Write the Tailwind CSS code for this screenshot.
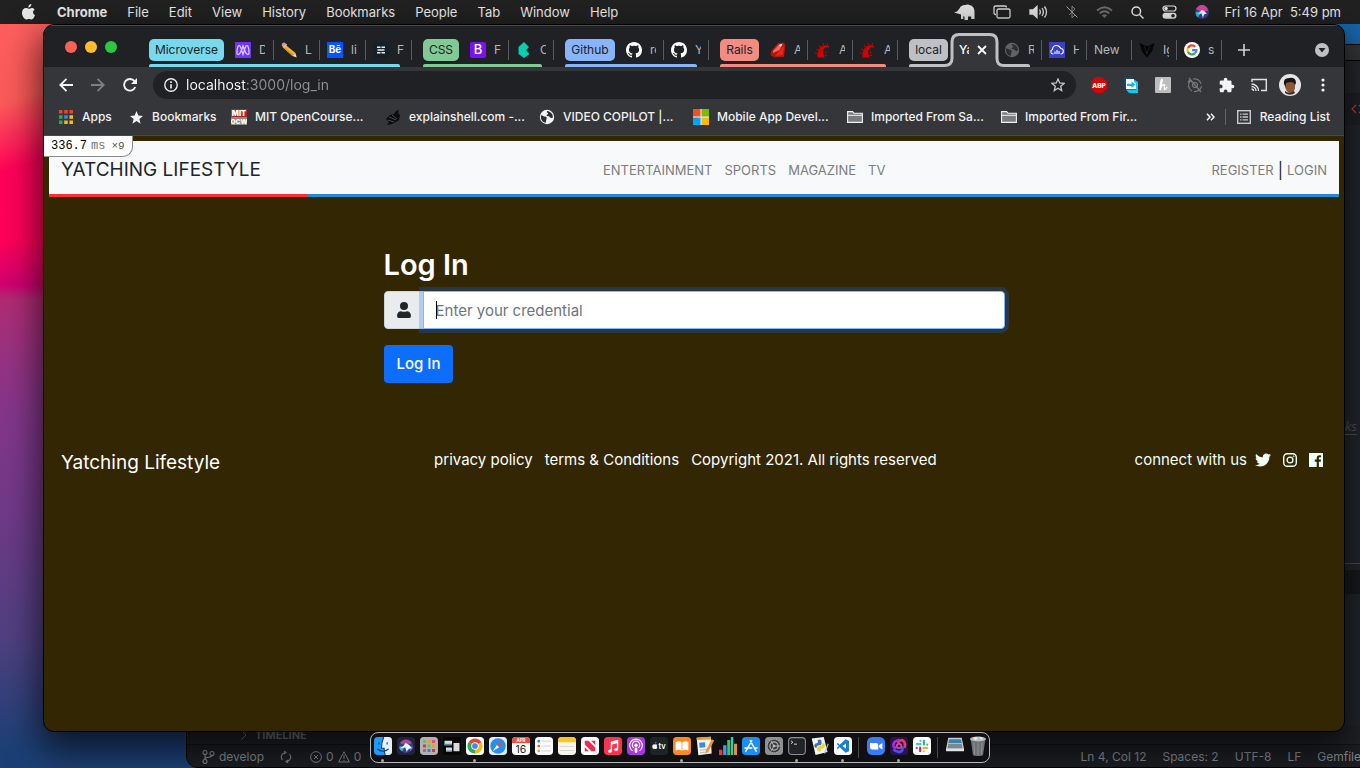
<!DOCTYPE html>
<html lang="en">
<head>
<meta charset="utf-8">
<title>Yatching Lifestyle</title>
<script src="https://cdn.jsdelivr.net/npm/@tailwindcss/browser@4"></script>
</head>
<body class="relative h-screen overflow-hidden bg-[#1867a9] font-[Inter,'Liberation_Sans',sans-serif] text-[13px] leading-4">

<!-- Shared icons -->
<svg class="hidden" aria-hidden="true">
  <symbol id="github" viewBox="0 0 16 16"><path fill="#fff" d="M8 0C3.58 0 0 3.58 0 8c0 3.54 2.29 6.53 5.47 7.59.4.07.55-.17.55-.38 0-.19-.01-.82-.01-1.49-2.01.37-2.53-.49-2.69-.94-.09-.23-.48-.94-.82-1.13-.28-.15-.68-.52-.01-.53.63-.01 1.08.58 1.23.82.72 1.21 1.87.87 2.33.66.07-.52.28-.87.51-1.07-1.78-.2-3.64-.89-3.64-3.95 0-.87.31-1.59.82-2.15-.08-.2-.36-1.02.08-2.12 0 0 .67-.21 2.2.82.64-.18 1.32-.27 2-.27s1.36.09 2 .27c1.53-1.04 2.2-.82 2.2-.82.44 1.1.16 1.92.08 2.12.51.56.82 1.27.82 2.15 0 3.07-1.87 3.75-3.65 3.95.29.25.54.73.54 1.48 0 1.07-.01 1.93-.01 2.2 0 .21.15.46.55.38A8.01 8.01 0 0 0 16 8c0-4.42-3.58-8-8-8z"/></symbol>
  <symbol id="rails" viewBox="0 0 16 16"><path fill="#d30001" d="M2.500 15.500C2 9.500 4.500 5 8.500 3.600c2.500-.8 4.500-.3 6 1.200l-1 .9c-3-1-4.800.3-5.200 2.800-.3 2 .2 4.500 1.400 7z"/><path stroke="#d30001" stroke-width="1.200" d="M1.800 11.500L.2 11M3 8L1.500 7M5.300 5L4.300 3.600M8.500 3L8.200 1.300M12 2.800l.6-1.500M10 10l1.500.5M10.300 13l1.700.7"/></symbol>
  <symbol id="globe" viewBox="0 0 16 16"><circle cx="8" cy="8" r="7.200" fill="currentColor"/><path fill="#2c2d30" d="M2 6.200c2 .3 2.600 1.200 4 1.400 1.600.2 2 1.200 1.500 2.400-.6 1.300-.2 2-.8 3.800-3-.4-5.400-3.400-4.700-7.600zM8.200 2c-.7 1-.2 1.600.6 2.100.7.500.4 1.300-.5 1.500-1 .3-1 1.200 0 1.500 1.400.3 2 .2 2.600 1.200.5.800 1.200.9 2.800.4.700-3-1.500-6-5.500-6.700z"/></symbol>
  <symbol id="folder" viewBox="0 0 16 14"><path fill="#7a7b7e" stroke="#f1f3f4" stroke-width="1.100" d="M.6 12.400V1.600h5l1.500 1.700h8.300v9.100z"/><path stroke="#f1f3f4" d="M1 5.300h14"/></symbol>
</svg>

<!-- Wallpaper -->
<div class="absolute inset-y-0 left-0 w-[400px] bg-[linear-gradient(180deg,#ff0a5c_0px,#ff0058_240px,#d00070_284px,#b02c74_300px,#9a3280_350px,#84368a_410px,#6e3a88_520px,#4e4080_640px,#1c4076_750px)]"></div>
<div class="absolute left-0 top-0 h-[240px] w-[60px] bg-[linear-gradient(162deg,#ff6060_0px,#fa5a58_100px,#ff0058_165px,transparent_230px)]"></div>

<!-- Editor window behind the browser -->
<section aria-label="Editor" class="absolute -right-3 bottom-0 left-[186px] top-11 flex flex-col overflow-hidden rounded-xl border border-black bg-[#23262e] text-[#868b94]">
  <div class="h-4 shrink-0 border-b border-black bg-[#353638]"></div>
  <div class="flex h-16 shrink-0 flex-col justify-end bg-[#25282f]">
    <div class="flex h-8 items-center justify-end bg-[#1f2126] text-[#c0393f]"><svg class="h-3 w-5" viewBox="0 0 20 12" fill="none" stroke="currentColor" stroke-width="1.200"><path d="M5 2L1 6l4 4M8 2l4 4-4 4"/></svg></div>
  </div>
  <div class="flex grow flex-col items-end justify-center pr-[14px] pt-[164px] font-['Noto_Sans'] italic text-[#50545c]"><span class="border-b border-[#50545c]">links</span></div>
  <div class="h-[7px] shrink-0 border-t border-[#4a4c50]"></div>
  <div class="h-6 shrink-0 bg-[#18191d]"></div>
  <div class="flex h-[150px] shrink-0 items-end bg-[#22252c]">
    <div class="flex h-[18px] w-full items-center gap-2 bg-[#202227] pl-[54px] text-[11px] font-bold text-[#75787e]"><svg class="h-2.5 w-1.5" viewBox="0 0 6 10" fill="none" stroke="currentColor"><path d="M.5 .5L5 5 .5 9.500"/></svg>TIMELINE</div>
  </div>
  <footer class="flex h-[23px] shrink-0 items-center border-t border-black/30 bg-[#1c1e23] pl-[15px] pt-0.5 text-xs">
    <svg class="mr-1 h-[14px] w-[13px]" viewBox="0 0 13 14" fill="none" stroke="currentColor" stroke-width="1.100"><circle cx="3" cy="2.500" r="2"/><circle cx="3" cy="11.500" r="2"/><circle cx="10" cy="3.500" r="2"/><path d="M3 4.500v5M10 5.500c0 2.500-7 1-7 3.500"/></svg>
    <span class="mr-4">develop</span>
    <svg class="mr-[18px] h-3 w-3" viewBox="0 0 12 12" fill="none" stroke="currentColor" stroke-width="1.100"><path d="M2.500 9A4.600 4.600 0 0 1 5 1.500M9.500 3A4.600 4.600 0 0 1 7 10.500M4 0l2 1.500L4 3M8 9l-2 1.500L8 12"/></svg>
    <svg class="mr-1 h-3 w-3" viewBox="0 0 12 12" fill="none" stroke="currentColor"><circle cx="6" cy="6" r="5.400"/><path d="M4 4l4 4M8 4L4 8"/></svg>0
    <svg class="mx-1 h-3 w-3" viewBox="0 0 12 12" fill="none" stroke="currentColor"><path d="M6 .8L11.400 11H.6zM6 4v4M6 9v1"/></svg>0
    <div class="ml-auto flex gap-4 pr-2.5"><span>Ln 4, Col 12</span><span>Spaces: 2</span><span>UTF-8</span><span>LF</span><span>Gemfile</span></div>
  </footer>
</section>

<!-- System menu bar -->
<header class="relative flex h-6 items-center bg-[#212121] pl-[21px] pr-[19px] text-[13px] text-[#ececec]">
  <svg class="mr-[21px] h-4 w-[15px]" viewBox="0 0 15 16" fill="#e6e6e6"><path d="M10.400 0c.1 1.900-1.400 3.500-3.100 3.400C7.100 1.700 8.700.1 10.400 0zM13.600 5.400c-2.300 1.500-1.900 4.700.5 5.700-.5 1.500-1.900 4.400-3.600 4.400-1 0-1.400-.6-2.600-.6s-1.700.6-2.600.6C3.300 15.500 1 12 1 8.800c0-3 1.900-4.800 3.900-4.800 1.100 0 2 .7 2.900.7.800 0 1.700-.8 3.100-.8 1 0 2.100.5 2.700 1.500z"/></svg>
  <nav class="flex gap-5 whitespace-nowrap"><b class="font-bold">Chrome</b><span>File</span><span>Edit</span><span>View</span><span>History</span><span>Bookmarks</span><span>People</span><span>Tab</span><span>Window</span><span>Help</span></nav>
  <div class="ml-auto flex items-center gap-[18px]">
    <svg class="h-4 w-[21px]" viewBox="0 0 21 16" fill="#e0e0e0"><path d="M0 8.500l3-1 2.500-3C6.500 2 9 .5 12 1c1-.8 3-.6 4 .3C19.500 2 20.500 5 20.500 8v7h-3.300v-2.500H14V16h-3.500v-3.300l-1.200-.7V15H7v-4.500L4.500 9.800z"/></svg>
    <svg class="h-[14px] w-[18px]" viewBox="0 0 18 14" fill="none" stroke="#d8d8d8" stroke-width="1.300"><path d="M3 9.500H2.500A1.500 1.500 0 0 1 1 8V2.500A1.500 1.500 0 0 1 2.500 1H12a1.500 1.500 0 0 1 1.500 1.500"/><rect x="4" y="4" width="13" height="9" rx="1.500"/></svg>
    <svg class="h-[14px] w-[19px]" viewBox="0 0 19 14" fill="none" stroke="#e0e0e0" stroke-width="1.300"><path fill="#e0e0e0" d="M1 5h3l4-3.500v11L4 9H1z"/><path d="M10.500 4.500q1.700 2.500 0 5M13 3q2.800 4 0 8M15.500 1.500q4 5.500 0 11"/></svg>
    <svg class="h-[14px] w-3" viewBox="0 0 12 14" fill="none" stroke="#858585"><path d="M3 4l6 6-3 3V1l3 3-6 6"/><path d="M.5 1.500l11 11" stroke="#aaa"/></svg>
    <svg class="h-3 w-[17px]" viewBox="0 0 17 12" fill="none" stroke="#6e6e6e" stroke-width="2"><path d="M1 4.500q7.500-6.500 15 0M3.700 7.300q4.800-4 9.600 0"/><path fill="#6e6e6e" stroke="none" d="M5.800 9.300q2.700-2.200 5.400 0L8.500 12z"/></svg>
    <svg class="h-[13px] w-[13px]" viewBox="0 0 13 13" fill="none" stroke="#e6e6e6" stroke-width="1.500"><circle cx="5.300" cy="5.300" r="4.300"/><path d="M8.500 8.500l4 4"/></svg>
    <svg class="h-[14px] w-[15px]" viewBox="0 0 15 14"><rect x="1" y="1" width="13" height="5" rx="2.500" fill="none" stroke="#e6e6e6" stroke-width="1.200"/><circle cx="4" cy="3.500" r="1.800" fill="#e6e6e6"/><rect x=".5" y="7.700" width="14" height="6" rx="3" fill="#e6e6e6"/><circle cx="11" cy="10.700" r="1.800" fill="#212121"/></svg>
    <svg class="-mr-0.5 h-[14px] w-[14px]" viewBox="0 0 14 14"><circle cx="7" cy="7" r="7" fill="#33408c"/><path fill="#e0409c" d="M1 4Q5-2 10 .8q3 2.200 3 5L7 7z"/><path fill="#28b8d8" d="M1 7l6-1-4 6.500Q0 10 1 7z"/><path fill="#e8faff" d="M2 9q3-1 4.500-4Q9 5 12 9 9 8 8 13L6.500 8.500z"/></svg>
    <time class="whitespace-pre">Fri 16 Apr  5:49 pm</time>
  </div>
</header>

<!-- Browser window -->
<main class="absolute bottom-9 left-[43px] right-[15px] top-6 flex flex-col overflow-hidden rounded-[11px] border border-black bg-[#332602] shadow-[0_14px_34px_4px_rgba(0,0,0,0.65)]">

  <!-- Tab strip -->
  <div class="flex h-[42px] shrink-0 items-stretch border-t border-[#4a4b4e] bg-[#202124] text-xs text-[#b4b7bb]">
    <div class="flex w-[105px] shrink-0 items-center gap-2 pl-[21px]">
      <button aria-label="Close window" class="size-3 rounded-full bg-[#fe5f57]"></button><button aria-label="Minimise" class="size-3 rounded-full bg-[#febc2e]"></button><button aria-label="Zoom window" class="size-3 rounded-full bg-[#28c840]"></button>
    </div>

    <div class="relative mr-[11px] flex items-center pt-[7px]">
      <button class="mr-1 h-[22px] w-[75px] rounded-[5px] bg-[#78d9ec] text-[#202124]">Microverse</button>
      <div class="flex h-5 w-[46px] items-center gap-2 border-r border-[#5a5c60] pl-[7px]"><svg class="size-4 shrink-0" viewBox="0 0 16 16"><path fill="#6f33ff" d="M0 0h16v16H0z"/><path fill="none" stroke="#d9c8ff" stroke-width="1.300" d="M2 12c0-5 .5-8.500 2.200-8.500S6 7 8 12.500C10 7 10 3.500 11.800 3.500S14 7 14 12M2 12c2 1.500 3.500-.5 6-8 2.500 7.500 4 9.500 6 8"/></svg><span class="w-1.5 overflow-hidden">D</span></div>
      <div class="flex h-5 w-[46px] items-center gap-2 border-r border-[#5a5c60] pl-[7px]"><svg class="size-4 shrink-0" viewBox="0 0 16 16"><path fill="#f7b82f" d="M4 2.500L14.500 11l-3 3L1.500 5z"/><path fill="#d8922a" d="M2.500 6l1-1.200L13 13l-1.500 1z"/><path fill="#e88b8b" d="M1.200 1.500Q3-.5 5 1.700L2 5Q-.2 3.500 1.200 1.500z"/><path fill="#bcd" d="M5 1.700l1.200 1-3 3.300L2 5z"/><path fill="#f3dcb0" d="M14.500 11l1.200 4.500-4.200-1.500z"/></svg><span>L</span></div>
      <div class="flex h-5 w-[46px] items-center gap-2 border-r border-[#5a5c60] pl-[7px]"><span class="flex size-4 shrink-0 items-center justify-center bg-[#0057ff] text-[10px] font-bold text-white">Bē</span><span>li</span></div>
      <div class="flex h-5 w-[46px] items-center gap-2 border-r border-[#5a5c60] pl-[7px]"><svg class="size-4 shrink-0" viewBox="0 0 16 16"><rect width="16" height="16" rx="2" fill="#14202a"/><path stroke="#e8eef0" stroke-width="1.500" d="M4 5.200h3.500M8.500 5.200H12M4.500 8h7M4 10.800h3.500M8.500 10.800H12"/></svg><span>F</span></div>
      <div class="absolute bottom-0 left-0 right-3 h-[3px] rounded-t-[2px] bg-[#78d9ec]"></div>
    </div>

    <div class="relative mr-[11px] flex items-center pt-[7px]">
      <button class="mr-1 h-[22px] w-9 rounded-[5px] bg-[#81c995] text-[#202124]">CSS</button>
      <div class="flex h-5 w-[46px] items-center gap-2 border-r border-[#5a5c60] pl-[7px]"><span class="flex size-4 shrink-0 items-center justify-center rounded-[2px] bg-[#7a12f5] text-[13px] font-medium text-white">B</span><span>F</span></div>
      <div class="flex h-5 w-[45px] items-center gap-2 border-r border-[#5a5c60] pl-[7px]"><svg class="size-4 shrink-0" viewBox="0 0 16 16"><path fill="#00d1b2" d="M8 0l5 5-3 3 3.500 4L8 16l-5.500-4V5z"/></svg><span class="w-1.5 overflow-hidden">C</span></div>
      <div class="absolute bottom-0 left-0 right-3 h-[3px] rounded-t-[2px] bg-[#81c995]"></div>
    </div>

    <div class="relative mr-[11px] flex items-center pt-[7px]">
      <button class="mr-1 h-[22px] w-[50px] rounded-[5px] bg-[#8ab4f8] text-[#202124]">Github</button>
      <div class="flex h-5 w-[45px] items-center gap-2 border-r border-[#5a5c60] pl-[7px]"><svg class="size-4 shrink-0"><use href="#github"/></svg><span class="w-1.5 overflow-hidden">re</span></div>
      <div class="flex h-5 w-[45px] items-center gap-2 border-r border-[#5a5c60] pl-[7px]"><svg class="size-4 shrink-0"><use href="#github"/></svg><span class="w-1.5 overflow-hidden">Y</span></div>
      <div class="absolute bottom-0 left-0 right-3 h-[3px] rounded-t-[2px] bg-[#8ab4f8]"></div>
    </div>

    <div class="relative mr-[11px] flex items-center pt-[7px]">
      <button class="mr-1 h-[22px] w-[39px] rounded-[5px] bg-[#f28b82] text-[#202124]">Rails</button>
      <div class="flex h-5 w-[45px] items-center gap-2 border-r border-[#5a5c60] pl-[7px]"><svg class="size-4 shrink-0" viewBox="0 0 16 16"><path fill="#b3140c" d="M1 9L8 1l6-.5 1.500 3L14 15l-10 .5L.5 13z"/><path fill="#f0695c" d="M3 9l5.500-6 4-1-3 6L3 11z"/><path fill="#fff" opacity=".75" d="M8.500 3l4-1.500L11 5z"/><path fill="#e02818" d="M9.500 8L14 4l-1 9-8 1z"/></svg><span class="w-1.5 overflow-hidden">A</span></div>
      <div class="flex h-5 w-[45px] items-center gap-2 border-r border-[#5a5c60] pl-[7px]"><svg class="size-4 shrink-0"><use href="#rails"/></svg><span class="w-1.5 overflow-hidden">A</span></div>
      <div class="flex h-5 w-[45px] items-center gap-2 border-r border-[#5a5c60] pl-[7px]"><svg class="size-4 shrink-0"><use href="#rails"/></svg><span class="w-1.5 overflow-hidden">A</span></div>
      <div class="absolute bottom-0 left-0 right-3 h-[3px] rounded-t-[2px] bg-[#f28b82]"></div>
    </div>

    <div class="relative flex items-center pt-[7px]">
      <div class="absolute bottom-0 left-0 right-3 h-[3px] rounded-t-[2px] bg-[#bdc1c6]"></div>
      <button class="mr-1 h-[22px] w-[39px] rounded-[5px] bg-[#bdc1c6] text-[#202124]">local</button>
      <div class="relative flex h-5 w-[45px] items-center gap-2 pl-[7px] text-white">
        <svg class="absolute -left-2 -top-[7px] h-[35px] w-[60px]" viewBox="0 0 60 35"><path fill="#35363a" d="M0 35h60v-1.500q-7 0-7-7V9q0-7.500-7-7.500H15Q8 1.500 8 9v17.500q0 7-8 7z"/><path fill="none" stroke="#bdc1c6" stroke-width="3" d="M0 32.500q8 0 8-7V9q0-7.500 7-7.500h31q7 0 7 7.500v16.500q0 7 7 7"/></svg>
        <span class="relative w-2.5 overflow-hidden font-medium">Ya</span>
        <button aria-label="Close tab" class="relative"><svg class="size-2.5" viewBox="0 0 10 10" stroke="#fff" stroke-width="1.800"><path d="M1 1l8 8M9 1L1 9"/></svg></button>
      </div>
      <div class="flex h-5 w-[45px] items-center gap-2 border-r border-[#5a5c60] pl-[7px]"><svg class="size-4 shrink-0 text-[#5f6368]"><use href="#globe"/></svg><span class="w-1.5 overflow-hidden">R</span></div>
    </div>
    <div class="flex items-center pt-[7px]">
      <div class="flex h-5 w-[45px] items-center gap-2 border-r border-[#5a5c60] pl-[7px]"><svg class="size-4 shrink-0" viewBox="0 0 16 16"><path fill="#3841c8" d="M0 0h16v16H0z"/><path fill="none" stroke="#fff" stroke-width="1.100" d="M4.500 12H4a2.300 2.300 0 0 1-.5-4.500C3.500 5 5 3.500 7.500 3.500S11 5 11.800 6.500c3.200 0 3.500 5 .2 5.500h-.5M6 12V9.500M8 12V8M10 12V9"/></svg><span class="w-1.5 overflow-hidden">H</span></div>
      <div class="flex h-5 w-[45px] items-center border-r border-[#5a5c60] pl-[7px]"><span>New</span></div>
      <div class="flex h-5 w-[45px] items-center gap-2 border-r border-[#5a5c60] pl-[7px]"><svg class="size-4 shrink-0" viewBox="0 0 16 16"><path fill="#050506" d="M.5 1L6 3.500 8 5l2-1.500L15.500 1 13 9.500 8 15.500 3 9.500z"/><path stroke="#202124" d="M5.500 4L8 12l2.500-8"/></svg><span class="w-1.5 overflow-hidden">Ig</span></div>
      <div class="flex h-5 w-[45px] items-center gap-2 border-r border-[#5a5c60] pl-[7px]"><svg class="size-4 shrink-0" viewBox="0 0 16 16" fill="none" stroke-width="2.200"><circle cx="8" cy="8" r="8" fill="#fff"/><path stroke="#ea4335" d="M4 6a4.400 4.400 0 0 1 7.200-1.300"/><path stroke="#fbbc05" d="M4 10a4.400 4.400 0 0 1 0-4"/><path stroke="#34a853" d="M10.800 11.400A4.400 4.400 0 0 1 4 10"/><path stroke="#4285f4" d="M8 8.200h4.400c0 1.200-.6 2.400-1.600 3.200"/></svg><span>s</span></div>
      <button aria-label="New tab" class="ml-4"><svg class="size-3" viewBox="0 0 12 12" stroke="#d0d2d5" stroke-width="1.600"><path d="M6 0v12M0 6h12"/></svg></button>
    </div>
    <button aria-label="Search tabs" class="ml-auto mr-[15px] pt-[7px]"><svg class="size-[14px]" viewBox="0 0 14 14"><circle cx="7" cy="7" r="7" fill="#bdc1c6"/><path fill="#202124" d="M3.500 5h7L7 9.500z"/></svg></button>
  </div>

  <!-- Toolbar -->
  <div class="flex h-9 shrink-0 items-center bg-[#35363a] pl-[15px] pr-[13px]">
    <button aria-label="Back" class="mr-[18px]"><svg class="size-[14px]" viewBox="0 0 14 14" fill="none" stroke="#f1f3f4" stroke-width="1.800"><path d="M14 7H1.500M7.500 .8L1.300 7l6.200 6.200"/></svg></button>
    <button aria-label="Forward" class="mr-[18px]"><svg class="size-[14px]" viewBox="0 0 14 14" fill="none" stroke="#7d7f83" stroke-width="1.800"><path d="M0 7h12.500M6.500 .8L12.700 7l-6.200 6.200"/></svg></button>
    <button aria-label="Reload" class="mr-4"><svg class="size-[14px]" viewBox="0 0 14 14" fill="none" stroke="#f1f3f4" stroke-width="1.900"><path d="M12.300 9A5.800 5.800 0 1 1 11.500 3.200"/><path fill="#f1f3f4" stroke="none" d="M14 0v6H8z"/></svg></button>
    <div class="flex h-7 grow items-center rounded-full bg-[#202124] px-[11px]">
      <svg class="mr-2 size-[14px]" viewBox="0 0 14 14" fill="none" stroke="#e8eaed" stroke-width="1.400"><circle cx="7" cy="7" r="6.200"/><path stroke-width="1.700" d="M7 6.200v4.300M7 3.200v1.700"/></svg>
      <label for="url" class="sr-only">Address</label>
      <input id="url" class="h-7 grow bg-[linear-gradient(90deg,#ffffff_61px,#8e9196_61px)] bg-clip-text text-[14px] leading-7 text-transparent outline-none" value="localhost:3000/log_in">
      <button aria-label="Bookmark this page"><svg class="size-[14px]" viewBox="0 0 14 14" fill="none" stroke="#c4c7ca" stroke-width="1.300"><path d="M7 1l1.700 4 4.300.4-3.300 2.800 1 4.300L7 10.200l-3.700 2.300 1-4.300L1 5.400 5.300 5z"/></svg></button>
    </div>
    <div class="ml-[15px] flex items-center gap-4">
      <svg class="size-4" viewBox="0 0 16 16"><path fill="#d2060a" d="M4.700 0h6.600L16 4.700v6.600L11.300 16H4.700L0 11.300V4.700z"/><text x="8" y="10.600" font-size="6.500" font-weight="800" text-anchor="middle" fill="#fff">ABP</text></svg>
      <svg class="size-4" viewBox="0 0 16 16"><path fill="#0b4a7c" d="M1 0h9v11H1z"/><path fill="#fff" d="M3 2h8v2l3 2v6H3z"/><path fill="#10c8e8" d="M11 2.500l4 2.500v11H6l-3-3.500h10V6.500l-2-1.500z"/><path fill="#16b4e0" d="M4 6.700h4.500V4.500l3.800 3.300-3.800 3.200V9H4z"/></svg>
      <svg class="size-4" viewBox="0 0 16 16"><rect width="16" height="16" rx="1" fill="#bdbdbd"/><path fill="none" stroke="#fff" stroke-width="1.500" d="M5 9C7 6 8 2.500 6.800 2.500S5.500 6 5 13c1-4 2.500-5.500 4-5.500S8.500 12 9.500 12.500 11.500 11 12 10"/></svg>
      <svg class="size-4" viewBox="0 0 16 16" fill="none" stroke="#77797c" stroke-width="1.200"><path d="M5 14A6.500 6.500 0 0 1 3 4M6 2a6.500 6.500 0 0 1 8 5M14.500 9A6.500 6.500 0 0 1 7 14.500M1 5l2-2 2 2M2 1l12 14"/><circle cx="8" cy="8" r="2.500"/></svg>
      <svg class="size-4" viewBox="1 0 23 23" fill="#f1f3f4"><path d="M20.500 11H19V7c0-1.100-.9-2-2-2h-4V3.500C13 2.120 11.880 1 10.500 1S8 2.120 8 3.500V5H4c-1.100 0-1.990.9-1.990 2v3.800H3.500c1.490 0 2.700 1.210 2.700 2.700s-1.210 2.700-2.700 2.700H2V20c0 1.100.9 2 2 2h3.800v-1.500c0-1.490 1.210-2.700 2.700-2.700s2.700 1.210 2.700 2.700V22H17c1.100 0 2-.9 2-2v-4h1.500c1.380 0 2.500-1.120 2.500-2.500S21.880 11 20.500 11z"/></svg>
      <svg class="size-4" viewBox="0 0 16 16" fill="none" stroke="#e0e2e5" stroke-width="1.400"><path d="M1 5V2.500h14.300v11H10M.5 12a2 2 0 0 1 2 2M.5 9.500A4.500 4.500 0 0 1 5 14M.5 7A7 7 0 0 1 7.500 14"/></svg>
      <svg class="-ml-1 size-[22px]" viewBox="0 0 22 22"><circle cx="11" cy="11" r="11" fill="#e6e6e8"/><path fill="#8a5a38" d="M6 8q5-6 10 0v6q-1 5-5 5-3 0-5-6z"/><path fill="#1b1512" d="M5 10q-1-6 5-6 7-1 7 5l-1 2q-1-3-4-3-4 0-5 1.500L6.500 13z"/><path fill="#3d2a1c" d="M6 17q3 2 5 2l4-2 1 2q-5 3.500-10 0z"/></svg>
      <button aria-label="Chrome menu" class="-ml-0.5"><svg class="h-[14px] w-4" viewBox="0 0 16 14" fill="#f1f3f4"><circle cx="8" cy="2" r="1.600"/><circle cx="8" cy="7" r="1.600"/><circle cx="8" cy="12" r="1.600"/></svg></button>
    </div>
  </div>

  <!-- Bookmarks bar -->
  <nav aria-label="Bookmarks" class="flex h-[33px] shrink-0 items-center whitespace-nowrap border-b border-[#47484b] bg-[#35363a] pb-1 pl-[15px] pr-[14px] text-xs font-medium text-[#f1f3f4]">
    <a href="#" class="flex w-[71px] items-center gap-[9px]"><svg class="size-[14px]" viewBox="0 0 14 14"><path fill="#ea4335" d="M0 0h3.500v3.500H0zM5.200 0h3.500v3.500H5.200zM10.400 0H14v3.500h-3.600z"/><path fill="#34a853" d="M0 5.200h3.500v3.500H0zM0 10.400h3.500V14H0z"/><path fill="#4285f4" d="M5.200 5.200h3.500v3.500H5.200z"/><path fill="#fbbc05" d="M10.400 5.200H14v3.500h-3.600zM5.200 10.400h3.500V14H5.200zM10.400 10.400H14V14h-3.600z"/></svg>Apps</a>
    <a href="#" class="flex w-[101px] items-center gap-[9px]"><svg class="size-[13px]" viewBox="0 0 14 14" fill="#f1f3f4"><path d="M7 0l2 4.900 5 .4-3.900 3.300 1.300 5L7 10.900l-4.400 2.700 1.300-5L0 5.300l5-.4z"/></svg>Bookmarks</a>
    <a href="#" class="flex w-[154px] items-center gap-2"><svg class="size-4" viewBox="0 0 16 16"><path fill="#b5202a" d="M0 0h16v8H0z"/><path fill="#8c8c86" d="M0 8h16v8H0z"/><text x="8" y="7" font-size="7.500" font-weight="900" text-anchor="middle" fill="#fff">MIT</text><text x="8" y="15" font-size="6.500" font-weight="900" text-anchor="middle" fill="#fff">OCW</text></svg>MIT OpenCourse...</a>
    <a href="#" class="flex w-[154px] items-center gap-2"><svg class="size-4" viewBox="0 0 16 16"><path fill="#0c0c0d" d="M1 10l4-4 4-1 2-3 3-1-1 3 2 2-1 5-3 2-4 2-5 1 2-3z"/><path stroke="#4a4b4e" d="M4 8l7 3M7 6l5 4M3 11l6 2"/></svg>explainshell.com -...</a>
    <a href="#" class="flex w-[154px] items-center gap-2"><svg class="size-4 text-[#f1f3f4]"><use href="#globe"/></svg>VIDEO COPILOT |...</a>
    <a href="#" class="flex w-[154px] items-center gap-2"><svg class="size-4" viewBox="0 0 16 16"><path fill="#eef" d="M0 0h16v16H0z"/><path fill="#f25022" d="M0 0h7.500v7.500H0z"/><path fill="#7fba00" d="M8.500 0H16v7.500H8.500z"/><path fill="#00a4ef" d="M0 8.500h7.500V16H0z"/><path fill="#ffb900" d="M8.500 8.500H16V16H8.500z"/></svg>Mobile App Devel...</a>
    <a href="#" class="flex w-[154px] items-center gap-2"><svg class="h-[14px] w-4"><use href="#folder"/></svg>Imported From Sa...</a>
    <a href="#" class="flex items-center gap-2"><svg class="h-[14px] w-4"><use href="#folder"/></svg>Imported From Fir...</a>
    <button aria-label="More bookmarks" class="ml-auto"><svg class="h-2 w-[9px]" viewBox="0 0 9 8" fill="none" stroke="#f1f3f4" stroke-width="1.500"><path d="M1 .8L4 4 1 7.200M5 .8L8 4 5 7.200"/></svg></button>
    <span class="ml-[10px] mr-[11px] h-4 w-px bg-[#606266]"></span>
    <button class="flex items-center gap-[9px]"><svg class="size-[14px]" viewBox="0 0 14 14" fill="none" stroke="#c8cacd"><rect x=".7" y=".7" width="12.600" height="12.600" stroke-width="1.400"/><path stroke-width="1.300" d="M3 4.200h1.500M5.500 4.200H11M3 7h1.500M5.500 7H11M3 9.800h1.500M5.500 9.800H11"/></svg>Reading List</button>
  </nav>

  <!-- Page -->
  <div class="relative grow p-[5px] text-base text-white">
    <header class="flex h-[53px] items-center justify-between bg-[#f8f9fb] px-3 pt-1">
      <a href="#" class="mr-4 text-[19px] leading-7 text-[#212529]">YATCHING LIFESTYLE</a>
      <nav class="flex gap-3 text-[13px] leading-6 text-[#7c7d7e]"><a href="#">ENTERTAINMENT</a><a href="#">SPORTS</a><a href="#">MAGAZINE</a><a href="#">TV</a></nav>
      <div class="flex gap-1 text-[13px] leading-6 text-[#7c7d7e]"><a href="#">REGISTER</a><span class="text-base text-[#212529]">|</span><a href="#">LOGIN</a></div>
    </header>
    <div class="flex h-[3px]"><div class="w-1/5 bg-[#ff3030]"></div><div class="grow bg-[#2488d8]"></div></div>

    <form class="mx-auto mt-12 w-1/2 px-3">
      <h2 class="mb-2 pt-0.5 text-[29px] font-semibold leading-9">Log In</h2>
      <div class="mb-4 flex h-[38px]">
        <label for="credential" class="flex w-10 shrink-0 items-center justify-center rounded-l border border-[#ced4da] bg-[#e9ecef]"><span class="sr-only">Credential</span><svg class="h-4 w-[14px]" viewBox="0 0 14 16" fill="#212529"><circle cx="7" cy="4" r="4"/><path d="M0 14.200C0 11 1.800 9.200 4.200 9.200q2.800 1.200 5.600 0C12.200 9.200 14 11 14 14.200q0 1.800-1.800 1.800H1.800Q0 16 0 14.200z"/></svg></label>
        <div class="relative -ml-px grow"><input id="credential" type="text" placeholder="Enter your credential" class="block h-full w-full rounded-r border border-[#86b7fe] bg-white px-3 text-[15px] text-[#212529] shadow-[0_0_0_4px_rgba(13,110,253,0.25)] outline-none placeholder:text-[#6c757d]"><span class="absolute left-[13px] top-2.5 h-[18px] w-px bg-black"></span></div>
      </div>
      <button type="submit" class="h-[38px] rounded bg-[#0d6efd] px-[13px] text-[15px] font-medium">Log In</button>
    </form>

    <footer class="flex items-start justify-between px-3 pt-16 text-[15px] leading-[26px]">
      <a href="#" class="mr-4 text-[19px] leading-[31px]">Yatching Lifestyle</a>
      <nav class="flex gap-3"><a href="#">privacy policy</a><a href="#">terms &amp; Conditions</a><span>Copyright 2021. All rights reserved</span></nav>
      <div class="flex items-center gap-2 pr-1 text-[#f0fff8]">connect with us
        <a href="#" aria-label="Twitter"><svg class="size-4" viewBox="0 0 512 512" fill="currentColor"><path d="M459.370 151.716c.325 4.548.325 9.097.325 13.645 0 138.720-105.583 298.558-298.558 298.558-59.452 0-114.680-17.219-161.137-47.106 8.447.974 16.568 1.299 25.340 1.299 49.055 0 94.213-16.568 130.274-44.832-46.132-.975-84.792-31.188-98.112-72.772 6.498.974 12.995 1.624 19.818 1.624 9.421 0 18.843-1.300 27.614-3.573-48.081-9.747-84.143-51.980-84.143-102.985v-1.299c13.969 7.797 30.214 12.670 47.431 13.319-28.264-18.843-46.781-51.005-46.781-87.391 0-19.492 5.197-37.360 14.294-52.954 51.655 63.675 129.300 105.258 216.365 109.807-1.624-7.797-2.599-15.918-2.599-24.040 0-57.828 46.782-104.934 104.934-104.934 30.213 0 57.502 12.670 76.670 33.137 23.715-4.548 46.456-13.320 66.599-25.340-7.798 24.366-24.366 44.833-46.132 57.827 21.117-2.273 41.584-8.122 60.426-16.243-14.292 20.791-32.161 39.308-52.628 54.253z"/></svg></a>
        <a href="#" aria-label="Instagram" class="ml-1"><svg class="size-[14px]" viewBox="0 0 14 14" fill="none" stroke="currentColor" stroke-width="1.400"><rect x=".7" y=".7" width="12.600" height="12.600" rx="3.600"/><circle cx="7" cy="7" r="2.900"/><circle cx="10.700" cy="3.300" r=".5" stroke-width=".8"/></svg></a>
        <a href="#" aria-label="Facebook" class="ml-1"><svg class="size-[14px]" viewBox="0 0 14 14"><path fill="currentColor" fill-rule="evenodd" d="M0 0h14v14H9.900V8.700h1.800l.3-2.100H9.900V5.400c0-.7.300-1.100 1.200-1.100h1V2.500c-2.900-.5-4.400.4-4.400 2.600v1.500H5.800v2.100h1.900V14H0z"/></svg></a>
      </div>
    </footer>

    <div class="absolute left-0 top-0 flex h-[21px] items-center gap-1 rounded-br-[10px] border-b border-r border-[#8a8a8a] bg-white px-[7px] font-['Liberation_Mono',monospace] text-xs text-black">336.7<span class="mr-0.5 text-[#777]">ms</span><span class="text-[11px] text-[#555]">×9</span></div>
  </div>
</main>

<!-- Dock -->
<nav aria-label="Dock" class="absolute left-1/2 top-[732px] flex h-[31px] -translate-x-1/2 rounded-lg border border-[#b8b8b8] bg-[#101012]">
  <div class="flex w-[23px] flex-col items-center gap-1 pt-1"><svg class="size-[18px]" viewBox="0 0 24 24"><rect width="24" height="24" rx="5" fill="#1e9bf6"/><path fill="#e4effa" d="M13 0h6q5 0 5 5v14q0 5-5 5h-4q-1.500-4-1.300-9H10Q10 6 13 0z"/><path fill="none" stroke="#103c6c" stroke-width="1.400" d="M6.500 7v3M17.500 7v3M4.500 16q7.500 6 15 0M13 0q-3 7-3 15h3.500q0 5 1.500 9"/></svg><i class="size-[3px] rounded-full bg-[#aaa]"></i></div>
  <div class="flex w-[23px] flex-col items-center pt-1"><svg class="size-[18px]" viewBox="0 0 24 24"><rect width="24" height="24" rx="5" fill="#22223a"/><circle cx="12" cy="12" r="9.500" fill="#3c3a78"/><path fill="#b04898" d="M4 8q8-9 16 0l-8 3z"/><path fill="#38b8c8" d="M3 13l8-1-4 7q-4-2-4-6z"/><path fill="#5868d0" d="M21 13l-7-1 4 7q3-2 3-6z"/><path fill="#e4fcff" d="M4 15q5-2 7.500-7Q17 10 20 15q-5-1-7 5l-2-6z"/></svg></div>
  <div class="flex w-[23px] flex-col items-center pt-1"><svg class="size-[18px]" viewBox="0 0 24 24"><rect width="24" height="24" rx="5" fill="#b0b2b4"/><path fill="#5ccb4e" d="M4 4h4v4H4zM10 10h4v4h-4z"/><path fill="#f29a2e" d="M10 4h4v4h-4zM16 10h4v4h-4z"/><path fill="#e84a7a" d="M16 4h4v4h-4zM4 16h4v4H4z"/><path fill="#d83a3a" d="M4 10h4v4H4zM16 16h4v4h-4z"/><path fill="#3a7ae8" d="M10 16h4v4h-4z"/></svg></div>
  <div class="flex w-[23px] flex-col items-center pt-1"><svg class="size-[18px]" viewBox="0 0 24 24"><rect width="24" height="24" rx="4" fill="#060606"/><path fill="#d8dcdc" d="M2 5h10v6H2zM14 8h8v11h-8zM4 14h8v6H4z"/><path fill="#5a8a98" d="M2 9h10v2H2zM4 18h8v2H4z"/></svg></div>
  <div class="flex w-[23px] flex-col items-center gap-1 pt-1"><svg class="size-[18px]" viewBox="0 0 24 24"><rect width="24" height="24" rx="5" fill="#fff"/><path fill="#ea4335" d="M12 12L3.300 7A10 10 0 0 1 20.700 7z"/><path fill="#34a853" d="M12 12v10A10 10 0 0 1 3.300 7z"/><path fill="#fbbc05" d="M12 12l8.700-5A10 10 0 0 1 12 22z"/><circle cx="12" cy="12" r="5" fill="#fff"/><circle cx="12" cy="12" r="3.800" fill="#4285f4"/></svg><i class="size-[3px] rounded-full bg-[#aaa]"></i></div>
  <div class="flex w-[23px] flex-col items-center pt-1"><svg class="size-[18px]" viewBox="0 0 24 24"><rect width="24" height="24" rx="5" fill="#e8ecf0"/><circle cx="12" cy="12" r="10.300" fill="#2490ee"/><path fill="#f04438" d="M19 5l-5.500 8.500-3-3z"/><path fill="#fff" d="M5 19l8.500-5.500-3-3z"/></svg></div>
  <div class="flex w-[23px] flex-col items-center pt-1"><svg class="size-[18px]" viewBox="0 0 24 24"><rect width="24" height="24" rx="5" fill="#fff"/><path fill="#f04a42" d="M5 0h14q5 0 5 5v3H0V5q0-5 5-5z"/><text x="12" y="6.500" font-size="6" font-weight="600" text-anchor="middle" fill="#fff">APR</text><text x="12" y="21" font-size="14" text-anchor="middle" fill="#222">16</text></svg></div>
  <div class="flex w-[23px] flex-col items-center pt-1"><svg class="size-[18px]" viewBox="0 0 24 24"><rect width="24" height="24" rx="5" fill="#fcfcfc"/><circle cx="5" cy="5.500" r="1.800" fill="#3a82f0"/><circle cx="5" cy="12" r="1.800" fill="#f04a42"/><circle cx="5" cy="18.500" r="1.800" fill="#f5a030"/><path stroke="#c4c4c6" d="M9 5.500h12M9 12h12M9 18.500h12"/></svg></div>
  <div class="flex w-[23px] flex-col items-center pt-1"><svg class="size-[18px]" viewBox="0 0 24 24"><rect width="24" height="24" rx="5" fill="#f8f6ee"/><path fill="#fbc71c" d="M5 0h14q5 0 5 5v2H0V5q0-5 5-5z"/><path stroke="#d0cec6" d="M2 12.500h20M2 18h20"/></svg></div>
  <div class="flex w-[23px] flex-col items-center pt-1"><svg class="size-[18px]" viewBox="0 0 24 24"><rect width="24" height="24" rx="5" fill="#fff"/><path fill="#f4284c" d="M5 5h5l9 9v5h-5L5 10zM13.500 5H19v5.500zM5 13.500v5.500h5.500z"/></svg></div>
  <div class="flex w-[23px] flex-col items-center pt-1"><svg class="size-[18px]" viewBox="0 0 24 24"><rect width="24" height="24" rx="5" fill="#fa3450"/><path fill="#fff" d="M9 6l10-2.500v12.300q0 3-3 3-2.500 0-2.500-2 0-2.200 3.700-2.600V8.300L10.800 10v8q0 3-3 3-2.500 0-2.500-2 0-2.200 3.700-2.600z"/></svg></div>
  <div class="flex w-[23px] flex-col items-center pt-1"><svg class="size-[18px]" viewBox="0 0 24 24"><rect width="24" height="24" rx="5" fill="#a838e0"/><g fill="none" stroke="#fff" stroke-width="1.500"><path d="M7.500 18.500a8.500 8.500 0 1 1 9 0M9 14.500a5 5 0 1 1 6 0"/></g><circle cx="12" cy="11" r="2.200" fill="#fff"/><rect x="10.200" y="14" width="3.600" height="7.500" rx="1.800" fill="#fff"/></svg></div>
  <div class="flex w-[23px] flex-col items-center pt-1"><svg class="size-[18px]" viewBox="0 0 24 24"><rect width="24" height="24" rx="5" fill="#1d2426"/><path fill="#fff" d="M7 8.500q0-1.500 1.500-2 0 1.500-1.500 2zM9.500 10.500q-1.500 1.500.3 3Q9 16 7.500 16q-1 0-1.500-.3-.7.300-1.200.3Q3 15.500 3 12.500q0-2.700 2.200-3 .8 0 1.300.4Q8.500 9 9.500 10.500z"/><text x="16.200" y="16" font-size="10" font-weight="600" text-anchor="middle" fill="#fff">tv</text></svg></div>
  <div class="flex w-[23px] flex-col items-center gap-1 pt-1"><svg class="size-[18px]" viewBox="0 0 24 24"><rect width="24" height="24" rx="5" fill="#fb8b1e"/><path fill="#fff" d="M3.500 7q4.500-2.500 8 0v11q-3.500-2.200-8 0zM12.500 7q3.500-2.500 8 0v11q-4.500-2.200-8 0z"/></svg><i class="size-[3px] rounded-full bg-[#aaa]"></i></div>
  <div class="flex w-[23px] flex-col items-center pt-[3px]"><svg class="size-5" viewBox="0 0 24 24"><path fill="#f2f2ee" d="M2 2l17-1 1 20-16 2z"/><path fill="#f09a28" d="M2 2l17-1v3L2 5z"/><path fill="#3a8ae0" d="M5 8l7-.5.500 6-7 .5z"/><path stroke="#a8a8a8" d="M6 17l11-1M6 20l11-1"/><path fill="#f0982a" d="M20 4l3 1.500-7 13-3.500 3 .7-4.500z"/></svg></div>
  <div class="flex w-[23px] flex-col items-center pt-1"><svg class="size-[18px]" viewBox="0 0 24 24"><path fill="#e83a30" d="M0 17h4.500v7H0z"/><path fill="#3a9cf0" d="M5.500 11H10v13H5.500z"/><path fill="#38c860" d="M11 4h4v20h-4z"/><path fill="#2ad0c0" d="M15.800 0h3.200v24h-3.200z"/><path fill="#f08a30" d="M20 9h4v15h-4z"/></svg></div>
  <div class="flex w-[23px] flex-col items-center pt-1"><svg class="size-[18px]" viewBox="0 0 24 24"><rect width="24" height="24" rx="5" fill="#1c8ef4"/><path fill="none" stroke="#fff" stroke-width="2" stroke-linecap="round" d="M13 5L6.500 16.500M11 5l6.500 11.500M4 14.500h9M16.500 14.500H20M5.500 18l-.5 1M18.500 18l.5 1"/></svg></div>
  <div class="flex w-[23px] flex-col items-center pt-1"><svg class="size-[18px]" viewBox="0 0 24 24" fill="none"><rect width="24" height="24" rx="5" fill="#8e9092"/><circle cx="12" cy="12" r="9" fill="#3a3c3e" stroke="#d0d0d0" stroke-dasharray="1.500 1"/><circle cx="12" cy="12" r="5.500" stroke="#b8b8b8" stroke-width="1.600"/><circle cx="12" cy="12" r="1.800" fill="#ccc"/><path stroke="#b8b8b8" stroke-width="1.200" d="M12 12h8M12 12L8 5M12 12l-4 7"/></svg></div>
  <div class="flex w-[23px] flex-col items-center gap-1 pt-1"><svg class="size-[18px]" viewBox="0 0 24 24" fill="none"><rect x=".8" y=".8" width="22.400" height="22.400" rx="4.500" fill="#222326" stroke="#8c8e90" stroke-width="1.400"/><path stroke="#e8e8e8" stroke-width="1.200" d="M4 5l2.500 2L4 9M8 9.500h4"/></svg><i class="size-[3px] rounded-full bg-[#aaa]"></i></div>
  <div class="flex w-[23px] flex-col items-center pt-1"><svg class="size-[18px]" viewBox="0 0 24 24"><path fill="#f4f4f0" d="M1 2l16-2 5 20-16 4z"/><path fill="#3a74a8" d="M9 4q5-2 5 2v3q0 2-3 2-4 0-3.500 3.500Q4 14 4.500 10.500 5 8 9 8z"/><path fill="#f8cc3c" d="M13 19q-5 1-5-2.500v-2q0-2.500 3.500-2.500 4 0 4-4 3 0 3 3.500 0 4-5.500 4z"/><path stroke="#bbb" stroke-width="1.500" d="M23 9l-5 13"/></svg></div>
  <div class="flex w-[23px] flex-col items-center gap-1 pt-1"><svg class="size-[18px]" viewBox="0 0 24 24"><rect width="24" height="24" rx="5" fill="#fff"/><path fill="#1b80cc" fill-rule="evenodd" d="M15.500 3L20 5v14l-4.500 2-8-7.200L5 16l-1.500-1 3-3-3-3L5 8l2.500 2.200zM16 8.500L11.500 12l4.500 3.500z"/></svg><i class="size-[3px] rounded-full bg-[#aaa]"></i></div>
  <span class="mx-1 my-1 w-px border-l border-[#48484a] pl-px"></span>
  <div class="flex w-[23px] flex-col items-center pt-1"><svg class="size-[18px]" viewBox="0 0 24 24"><rect width="24" height="24" rx="7" fill="#3a7cf4"/><path fill="#fff" d="M4 8h8q3 0 3 3v5.500H7q-3 0-3-3zM16 11l4.500-3v8.500L16 13.700z"/></svg></div>
  <div class="flex w-[23px] flex-col items-center gap-1 pt-1"><svg class="size-[18px]" viewBox="0 0 24 24" fill="none" stroke-width="3.500"><rect width="24" height="24" rx="5" fill="#30104e"/><path stroke="#f03a60" d="M11 8.500q1-5 6-4 5 3 2 10"/><path stroke="#3a5af0" d="M15.500 13q3 4-1 6.500-6 1.500-10-3"/><path stroke="#a030e0" d="M8.500 14q-5 1-4-4 1-5 8-6"/><circle cx="12" cy="12" r="3" stroke="#e050a0" stroke-width="2"/></svg><i class="size-[3px] rounded-full bg-[#aaa]"></i></div>
  <div class="flex w-[23px] flex-col items-center pt-1"><svg class="size-[18px]" viewBox="0 0 24 24" stroke-width="2.800" stroke-linecap="round"><rect width="24" height="24" rx="5" fill="#fff"/><path stroke="#36c5f0" d="M10 5v.1M5 9.500h5"/><path stroke="#2eb67d" d="M14.500 5v5M19 10v.1"/><path stroke="#ecb22e" d="M14 14.500h5M14.500 19v.1"/><path stroke="#e01e5a" d="M9.500 14v5M5 14.500v.1"/></svg></div>
  <span class="mx-1 my-1 w-px border-l border-[#48484a] pl-px"></span>
  <div class="flex w-[23px] flex-col items-center pt-1"><svg class="size-[18px]" viewBox="0 0 24 24"><path fill="#c8ccd0" d="M3 1h18l3 15H0z"/><path fill="#3a80b0" d="M4 3h16l1 5H3z"/><path fill="#7a8890" d="M3 9h18l1 6H2z"/><path fill="#dfe2e4" d="M0 16h24v3H0z"/></svg></div>
  <div class="flex w-[23px] flex-col items-center pt-[3px]"><svg class="size-5" viewBox="0 0 24 24"><path fill="#6c7072" d="M3 3h18l-3 20q-6 2-12 0z"/><ellipse cx="12" cy="3.500" rx="9.500" ry="3" fill="#b8bcbc"/><path fill="#e8e8e4" d="M6 2l4-1 2 2-3 2zM13 1l5 1-2 3z"/><path stroke="#9a9e9e" d="M7 8l1 14M12 8v15M17 8l-1 14"/></svg></div>
</nav>
</body>
</html>
